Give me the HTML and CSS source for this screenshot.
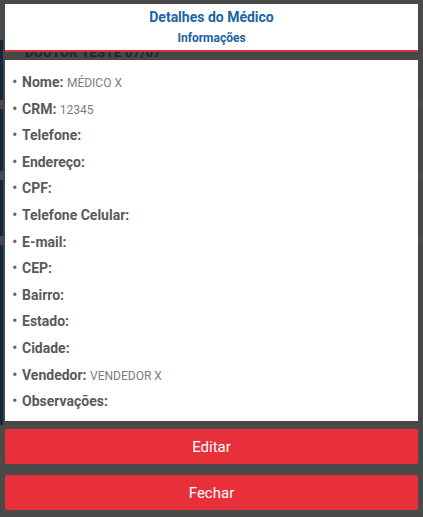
FILE: index.html
```html
<!DOCTYPE html>
<html lang="pt-BR">
<head>
  <meta charset="UTF-8">
  <meta name="viewport" content="width=device-width, initial-scale=1.0">
  <title>Detalhes do Médico</title>
  <link rel="stylesheet" href="styles.css">
</head>
<body>
  <!-- page behind the modal -->
  <div class="backdrop">
    <div class="card"><span class="card-title">DOUTOR TESTE 07/07</span></div>
    <div class="card"></div>
    <div class="card"></div>
    <div class="card"></div>
  </div>

  <div class="modal">
    <header class="modal-header">
      <h1>Detalhes do Médico</h1>
      <h2>Informações</h2>
    </header>

    <ul class="details">
      <li><b>Nome:</b> <span>MÉDICO X</span></li>
      <li><b>CRM:</b> <span>12345</span></li>
      <li><b>Telefone:</b></li>
      <li><b>Endereço:</b></li>
      <li><b>CPF:</b></li>
      <li><b>Telefone Celular:</b></li>
      <li><b>E-mail:</b></li>
      <li><b>CEP:</b></li>
      <li><b>Bairro:</b></li>
      <li><b>Estado:</b></li>
      <li><b>Cidade:</b></li>
      <li><b>Vendedor:</b> <span>VENDEDOR X</span></li>
      <li><b>Observações:</b></li>
    </ul>

    <button class="btn">Editar</button>
    <button class="btn">Fechar</button>
  </div>
</body>
</html>
```

FILE: styles.css
```css
body {
  margin: 0;
  font-family: Roboto, 'Noto Sans', sans-serif;
  background: #4a4a4a;
  height: 517px;
  overflow: hidden;
  position: relative;
}

/* Dimmed page behind */
.backdrop {
  padding-top: 40px;
  display: flex;
  flex-direction: column;
  gap: 9px;
}

.card {
  height: 60px;
  border-left: 3px solid #13283a;
  padding-left: 22px;
  background: #474747;
}

.card:nth-child(2) { height: 62px; }
.card:nth-child(3) { height: 56px; }
.card:nth-child(4) { height: 180px; }

.card-title {
  display: block;
  margin-top: 5px;
  font-weight: 700;
  font-size: 13px;
  color: #1a2633;
  letter-spacing: 0.3px;
}

/* Modal */
.modal {
  position: absolute;
  top: 4px;
  left: 5px;
  right: 5px;
  display: flex;
  flex-direction: column;
}

.modal-header {
  background: #fff;
  border-bottom: 2px solid #d9323c;
  text-align: center;
  padding: 5px 0 4px;
}

.modal-header h1 {
  margin: 0;
  font-size: 14px;
  font-weight: 700;
  color: #1b64a4;
  line-height: 17px;
}

.modal-header h2 {
  margin: 5px 0 0;
  font-size: 12px;
  font-weight: 700;
  color: #1b64a4;
  line-height: 15px;
}

.details {
  list-style: none;
  margin: 8px 0 0;
  background: #fff;
  padding: 9px 0 6.5px 7px;
}

.details li {
  height: 26.6px;
  line-height: 26.6px;
  color: #5c5c5c;
  font-size: 14px;
}

.details li::before {
  content: '\2022';
  display: inline-block;
  width: 10px;
  font-size: 16px;
  color: #666;
}

.details b {
  font-weight: 700;
  color: #5a5a5a;
}

.details span {
  font-size: 12px;
  color: #7d7d7d;
}

.btn {
  margin-top: 8px;
  height: 35px;
  border: none;
  border-radius: 2px;
  background: #e8303a;
  color: #fff;
  font-family: Roboto, sans-serif;
  font-size: 15px;
}

.btn + .btn {
  margin-top: 11px;
}
```
